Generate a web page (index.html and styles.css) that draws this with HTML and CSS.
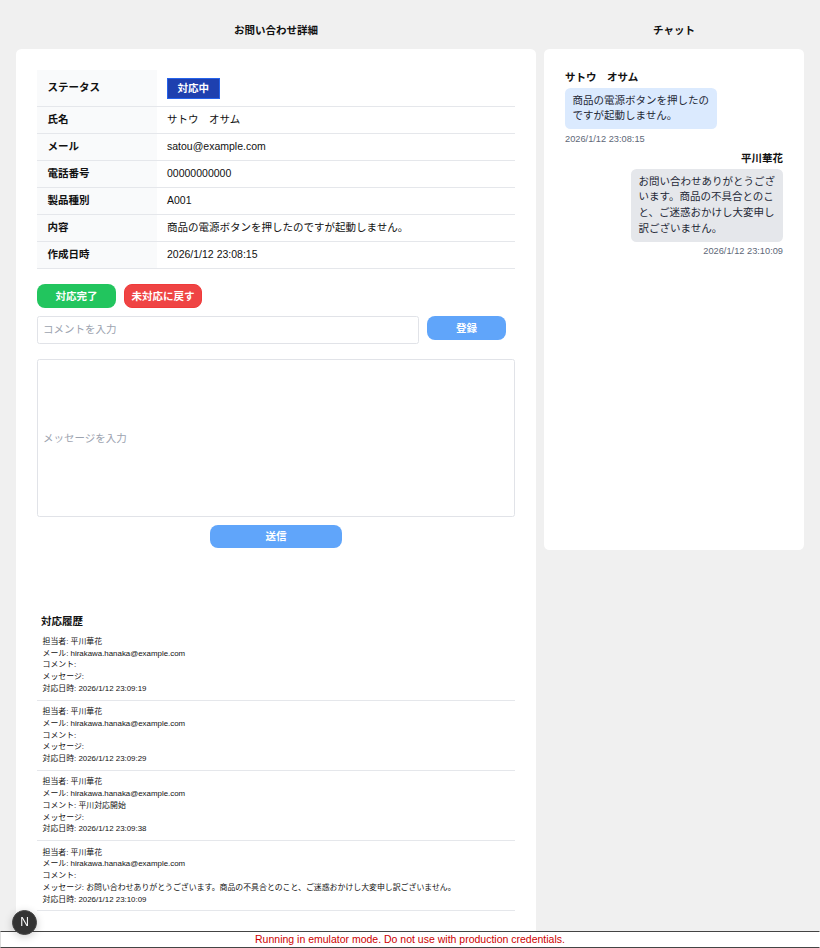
FILE: index.html
```html
<!DOCTYPE html>
<html lang="ja">
<head>
<meta charset="utf-8">
<title>お問い合わせ詳細</title>
<link rel="stylesheet" href="styles.css">
</head>
<body>
<div class="page">
  <section class="col col-main">
    <h2 class="col-title">お問い合わせ詳細</h2>
    <div class="card card-main">
      <table class="info">
        <tr class="row-status"><th>ステータス</th><td><span class="badge">対応中</span></td></tr>
        <tr><th>氏名</th><td>サトウ　オサム</td></tr>
        <tr><th>メール</th><td>satou@example.com</td></tr>
        <tr><th>電話番号</th><td>00000000000</td></tr>
        <tr><th>製品種別</th><td>A001</td></tr>
        <tr><th>内容</th><td>商品の電源ボタンを押したのですが起動しません。</td></tr>
        <tr><th>作成日時</th><td>2026/1/12 23:08:15</td></tr>
      </table>
      <div class="actions">
        <button class="btn btn-green">対応完了</button>
        <button class="btn btn-red">未対応に戻す</button>
      </div>
      <div class="comment-row">
        <input class="field comment" placeholder="コメントを入力">
        <button class="btn btn-blue">登録</button>
      </div>
      <div class="message-box"><span class="placeholder">メッセージを入力</span></div>
      <div class="send-row"><button class="btn btn-blue btn-send">送信</button></div>
      <h3 class="history-title">対応履歴</h3>
      <ul class="history">
        <li>
          <p>担当者: 平川華花</p><p>メール: hirakawa.hanaka@example.com</p><p>コメント:</p><p>メッセージ:</p><p>対応日時: 2026/1/12 23:09:19</p>
        </li>
        <li>
          <p>担当者: 平川華花</p><p>メール: hirakawa.hanaka@example.com</p><p>コメント:</p><p>メッセージ:</p><p>対応日時: 2026/1/12 23:09:29</p>
        </li>
        <li>
          <p>担当者: 平川華花</p><p>メール: hirakawa.hanaka@example.com</p><p>コメント: 平川対応開始</p><p>メッセージ:</p><p>対応日時: 2026/1/12 23:09:38</p>
        </li>
        <li>
          <p>担当者: 平川華花</p><p>メール: hirakawa.hanaka@example.com</p><p>コメント:</p><p>メッセージ: お問い合わせありがとうございます。商品の不具合とのこと、ご迷惑おかけし大変申し訳ございません。</p><p>対応日時: 2026/1/12 23:10:09</p>
        </li>
      </ul>
    </div>
  </section>
  <section class="col col-chat">
    <h2 class="col-title">チャット</h2>
    <div class="card card-chat">
      <div class="msg msg-user">
        <div class="msg-name">サトウ　オサム</div>
        <div class="bubble bubble-user">商品の電源ボタンを押したのですが起動しません。</div>
        <div class="msg-time">2026/1/12 23:08:15</div>
      </div>
      <div class="msg msg-staff">
        <div class="msg-name">平川華花</div>
        <div class="bubble bubble-staff">お問い合わせありがとうございます。商品の不具合とのこと、ご迷惑おかけし大変申し訳ございません。</div>
        <div class="msg-time">2026/1/12 23:10:09</div>
      </div>
    </div>
  </section>
</div>
<div class="dev-badge">N</div>
<div class="emulator">Running in emulator mode. Do not use with production credentials.</div>
</body>
</html>
```
FILE: styles.css
```css
* { box-sizing: border-box; }
html, body { margin: 0; height: 100%; overflow: hidden; }
body {
  background: #f0f0f0;
  color: #111;
  font-family: "Liberation Sans", "Noto Sans CJK JP", sans-serif;
  font-size: 10.5px;
}
.page { display: flex; gap: 8px; padding: 0 16px; align-items: flex-start; }
.col-main { width: 520px; flex: none; }
.col-chat { width: 260px; flex: none; }
.col-title { margin: 0; height: 49px; padding-top: 23px; font-size: 10.5px; line-height: 14px; font-weight: 700; text-align: center; }
.card { background: #fff; border-radius: 5.5px; }
.card-main { padding: 20.5px 21px; height: 920px; }
.card-chat { padding: 20.5px 21px 0; height: 501px; }
.info { width: 478px; border-collapse: collapse; table-layout: fixed; }
.info th, .info td { height: 27px; padding: 0 10.5px 2px; border-bottom: 1px solid #e5e7eb; text-align: left; line-height: 14px; }
.info th { width: 119.5px; background: #f9fafb; font-weight: 700; }
.info td { font-weight: 400; }
.info .row-status th, .info .row-status td { height: 37px; padding-bottom: 2px; }
.badge { display: inline-block; height: 21.5px; margin-top: 3px; padding: 0 9.5px; line-height: 19.5px; background: #1e40af; border: 1px solid #2563eb; color: #fff; font-weight: 700; vertical-align: middle; }
.actions { display: flex; gap: 8px; margin-top: 15px; }
.btn { border: 1px solid transparent; border-radius: 8px; padding: 0 0 1px; color: #fff; font-family: inherit; font-size: 10.5px; font-weight: 700; width: 79px; height: 24px; line-height: 20px; }
.btn-green { background: #22c55e; }
.btn-red { background: #ef4444; border-color: #f03a3a; width: 78px; }
.btn-blue { background: #60a5fa; }
.comment-row { display: flex; gap: 8px; margin-top: 8px; align-items: flex-start; }
.field { display: block; border: 1px solid #e1e3e8; border-radius: 2.5px; background: #fff; font-family: inherit; font-size: 10.5px; padding: 0 5px 1px; outline: none; }
.comment { width: 382px; height: 27.7px; }
.field::placeholder { color: #9ca3af; opacity: 1; }
.message-box { margin-top: 15.3px; width: 478px; height: 158px; border: 1px solid #e1e3e8; border-radius: 2.5px; padding: 0 5px 1px; display: flex; align-items: center; }
.placeholder { color: #9ca3af; }
.send-row { display: flex; justify-content: center; margin-top: 8px; }
.btn-send { width: 132px; height: 23.5px; }
.history-title { margin: 66px 0 0 4px; font-size: 10.5px; line-height: 14px; font-weight: 700; }
.history { list-style: none; margin: 7.5px 0 0; padding: 0; width: 478px; font-size: 7.9px; line-height: 11.75px; }
.history li { padding: 0 5.5px 5px; margin-bottom: 5.5px; border-bottom: 1px solid #e5e7eb; }
.history p { margin: 0; }
.msg-name { font-weight: 700; line-height: 14px; }
.msg-user { display: flex; flex-direction: column; align-items: flex-start; }
.msg-staff { display: flex; flex-direction: column; align-items: flex-end; margin-top: 6px; }
.bubble { margin-top: 4px; padding: 5px 7.5px; border-radius: 5.5px; width: 152px; line-height: 15.75px; color: #1f2937; }
.bubble-user { background: #dbeafe; }
.bubble-staff { background: #e5e7eb; }
.msg-time { margin-top: 3.5px; font-size: 9.25px; line-height: 12px; color: #606878; }
.dev-badge { position: fixed; left: 12px; top: 910px; width: 25px; height: 25px; border-radius: 50%; background: #333; border: 1px solid #444; color: #fff; font-size: 12px; line-height: 23px; text-align: center; box-shadow: 0 2px 8px rgba(0,0,0,.2); z-index: 2; }
.emulator { position: fixed; left: 0; right: 0; top: 931px; height: 17px; background: #fff; border: 1px solid #444; border-left-color: #ddd; border-right-color: #fff; color: #c00; font-size: 10.5px; line-height: 15px; text-align: center; }
```
